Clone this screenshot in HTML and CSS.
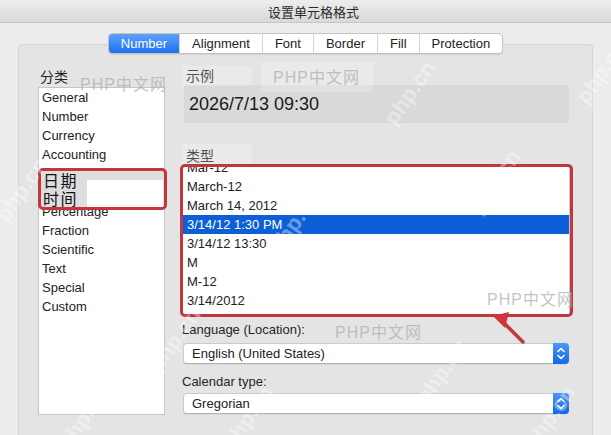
FILE: index.html
```html
<!DOCTYPE html>
<html lang="zh">
<head>
<meta charset="utf-8">
<title>设置单元格格式</title>
<link rel="stylesheet" href="styles.css">
</head>
<body>
<div class="titlebar">设置单元格格式</div>
<div class="tabs">
  <div class="seg">
    <span class="tab active">Number</span>
    <span class="tab">Alignment</span>
    <span class="tab">Font</span>
    <span class="tab">Border</span>
    <span class="tab">Fill</span>
    <span class="tab">Protection</span>
  </div>
</div>
<div class="panel">
  <div class="left">
    <div class="cat-label">分类</div>
    <div class="catlist">
      <div class="item">General</div>
      <div class="item">Number</div>
      <div class="item">Currency</div>
      <div class="item">Accounting</div>
      <div class="item">Date</div>
      <div class="item">Time</div>
      <div class="item">Percentage</div>
      <div class="item">Fraction</div>
      <div class="item">Scientific</div>
      <div class="item">Text</div>
      <div class="item">Special</div>
      <div class="item">Custom</div>
      <div class="dt">
        <span class="dt-line">日期</span>
        <span class="dt-line">时间</span>
        <span class="dt-white"></span>
      </div>
    </div>
  </div>
  <div class="right">
    <div class="r-label">示例</div>
    <div class="sample">2026/7/13 09:30</div>
    <div class="r-label type-label">类型</div>
    <div class="typelist">
      <div class="scroll">
        <div class="rows">
          <div class="row">Mar-12</div>
          <div class="row">March-12</div>
          <div class="row">March 14, 2012</div>
          <div class="row sel">3/14/12 1:30 PM</div>
          <div class="row">3/14/12 13:30</div>
          <div class="row">M</div>
          <div class="row">M-12</div>
          <div class="row">3/14/2012</div>
        </div>
      </div>
      <div class="redbox"></div>
    </div>
    <div class="small-label">Language (Location):</div>
    <div class="select">
      <span class="sel-text">English (United States)</span>
      <span class="stepper"><svg width="16" height="21" viewBox="0 0 16 21"><path d="M5 8.5 L8 5.5 L11 8.5 M5 12.5 L8 15.5 L11 12.5" fill="none" stroke="#fff" stroke-width="1.6" stroke-linecap="round" stroke-linejoin="round"/></svg></span>
    </div>
    <div class="small-label cal-label">Calendar type:</div>
    <div class="select select2">
      <span class="sel-text">Gregorian</span>
      <span class="stepper"><svg width="16" height="21" viewBox="0 0 16 21"><path d="M5 8.5 L8 5.5 L11 8.5 M5 12.5 L8 15.5 L11 12.5" fill="none" stroke="#fff" stroke-width="1.6" stroke-linecap="round" stroke-linejoin="round"/></svg></span>
    </div>
  </div>
</div>

<div class="wmbox wb1"></div>
<div class="wmbox wb2"></div>
<div class="wmbox wb3"></div>
<div class="wm w1">PHP中文网</div>
<div class="wm w2">PHP中文网</div>
<div class="wm w3">PHP中文网</div>
<div class="wm w4">PHP中文网</div>
<div class="wd d1">php.cn</div>
<div class="wd d2">php.cn</div>
<div class="wd d3">php.cn</div>
<div class="wd d4">php.cn</div>
<div class="wd d5">php.cn</div>
<div class="wd d6">php.cn</div>
<div class="wd d7">php.cn</div>
<div class="wd d8">php.cn</div>
<div class="wd d9">php.cn</div>
<div class="wd d10">php.cn</div>

<svg class="arrow" width="611" height="435" viewBox="0 0 611 435">
  <line x1="503" y1="322" x2="523" y2="342" stroke="#c2363e" stroke-width="3.5" stroke-linecap="round"/>
  <polygon points="493,316 509,312 505,328" fill="#d3333b"/>
</svg>
</body>
</html>
```
FILE: styles.css
```css
* { box-sizing: border-box; }
html, body { margin: 0; padding: 0; }
body {
  width: 611px;
  height: 435px;
  overflow: hidden;
  position: relative;
  background: #ececec;
  font-family: "Liberation Sans", "Noto Sans CJK SC", sans-serif;
  font-size: 13px;
  color: #222;
}
.titlebar {
  height: 23px;
  border-bottom: 1px solid #c6c6c6;
  background: linear-gradient(#ededed, #d9d9d9);
  text-align: center;
  font-family: "Noto Sans CJK SC", sans-serif;
  font-size: 13px;
  line-height: 22px;
  padding: 1px 0 0 16px;
  color: #2a2a2a;
}
.tabs {
  display: flex;
  justify-content: center;
  margin-top: 10px;
  position: relative;
  z-index: 2;
}
.seg {
  display: flex;
  height: 21px;
  border: 1px solid #c4c4c4;
  border-radius: 4px;
  background: #fff;
  box-shadow: 0 1px 1px rgba(0,0,0,0.08);
  overflow: hidden;
}
.tab {
  padding: 0 12px;
  line-height: 19px;
  border-left: 1px solid #d6d6d6;
  color: #222;
}
.tab:first-child { border-left: none; }
.tab.active {
  background: linear-gradient(#5ca2fb, #1d6ff0);
  color: #fff;
}
.panel {
  margin: -10px 18px 0;
  height: 391px;
  border: 1px solid #d6d6d6;
  border-bottom: none;
  border-radius: 4px 4px 0 0;
  background: #e4e4e4;
  padding: 21px 22px 0 19px;
  display: flex;
  gap: 17px;
}
.left { width: 127px; flex: none; }
.cat-label {
  height: 21px;
  line-height: 21px;
  font-size: 14px;
  padding-left: 2px;
  font-family: "Noto Sans CJK SC", sans-serif;
  color: #1e1e1e;
}
.catlist {
  height: 328px;
  border: 1px solid #c6c6c6;
  background: #fff;
  position: relative;
}
.item {
  line-height: 19px;
  height: 19px;
  padding-left: 3px;
  color: #222;
}
.dt {
  position: absolute;
  left: -1px;
  top: 80px;
  width: 129px;
  height: 42px;
  border: 3px solid #c2363e;
  border-radius: 5px;
  background: #dedede;
  padding-left: 2px;
}
.dt-line {
  display: block;
  font-family: "Noto Sans CJK SC", sans-serif;
  font-size: 16px;
  line-height: 18px;
  letter-spacing: 1.5px;
  color: #111;
}
.dt-white {
  position: absolute;
  left: 46px;
  top: 9px;
  width: 76px;
  height: 27px;
  background: #fff;
}
.right {
  width: 388px;
  flex: none;
  display: flex;
  flex-direction: column;
}
.r-label {
  height: 19px;
  line-height: 19px;
  font-size: 14px;
  padding-left: 4px;
  font-family: "Noto Sans CJK SC", sans-serif;
  color: #1e1e1e;
}
.sample {
  height: 38px;
  margin: 0 1px 0 2px;
  background: #d9d9d9;
  border-radius: 2px;
  font-size: 18px;
  line-height: 38px;
  padding-left: 5px;
  color: #1a1a1a;
}
.type-label { margin-top: 23px; }
.typelist {
  height: 150px;
  border: 1px solid #c6c6c6;
  background: #fff;
  position: relative;
}
.scroll { height: 100%; overflow: hidden; }
.rows { margin-top: -8.5px; }
.row {
  height: 19px;
  line-height: 19px;
  padding-left: 4px;
  color: #222;
}
.row.sel { background: #0c5fd6; color: #fff; }
.redbox {
  position: absolute;
  left: -3px;
  right: -4px;
  top: -2px;
  bottom: -3px;
  border: 3px solid #c2363e;
  border-radius: 5px;
}
.small-label {
  height: 19px;
  line-height: 19px;
  margin-top: 4.5px;
  color: #262626;
}
.cal-label { margin-top: 8px; }
.select {
  height: 21px;
  margin: 4px 1px 0 1px;
  background: #fff;
  border: 1px solid #cbcbcb;
  border-bottom-color: #b4b4b4;
  border-radius: 4px;
  display: flex;
  align-items: center;
  padding-left: 8px;
  box-shadow: 0 1px 0 rgba(0,0,0,0.05);
}
.select2 { margin-top: 2.5px; }
.sel-text { color: #222; }
.stepper {
  margin: -1px -1px -1px auto;
  width: 16px;
  height: 21px;
  background: linear-gradient(#4a96f9, #1668e6);
  border-radius: 0 4px 4px 0;
  display: flex;
}
.wmbox {
  position: absolute;
  background: rgba(255,255,255,0.22);
}
.wb1 { left: 182px; top: 66px; width: 70px; height: 20px; }
.wb2 { left: 261px; top: 62px; width: 112px; height: 30px; }
.wb3 { left: 182px; top: 144px; width: 70px; height: 20px; }
.wm {
  position: absolute;
  font-family: "Liberation Sans", "Noto Sans CJK SC", sans-serif;
  font-size: 16px;
  line-height: 18px;
  letter-spacing: 1px;
  color: rgba(175,175,175,0.75);
  white-space: nowrap;
}
.w1 { left: 80px; top: 76px; }
.w2 { left: 273px; top: 69px; }
.w3 { left: 487px; top: 291px; }
.w4 { left: 335px; top: 324px; }
.wd {
  position: absolute;
  font-family: "Liberation Sans", sans-serif;
  font-size: 22px;
  font-weight: bold;
  color: rgba(255,255,255,0.4);
  white-space: nowrap;
  transform: translate(-50%, -50%) rotate(-55deg);
}
.d1 { left: 410px; top: 93px; }
.d2 { left: 495px; top: 182px; }
.d3 { left: 602px; top: 72px; }
.d4 { left: 295px; top: 222px; }
.d5 { left: 22px; top: 190px; }
.d6 { left: 442px; top: 372px; }
.d7 { left: 248px; top: 418px; }
.d8 { left: 84px; top: 418px; }
.d9 { left: 175px; top: 340px; }
.d10 { left: 550px; top: 418px; }
.arrow {
  position: absolute;
  left: 0;
  top: 0;
  pointer-events: none;
}
```
